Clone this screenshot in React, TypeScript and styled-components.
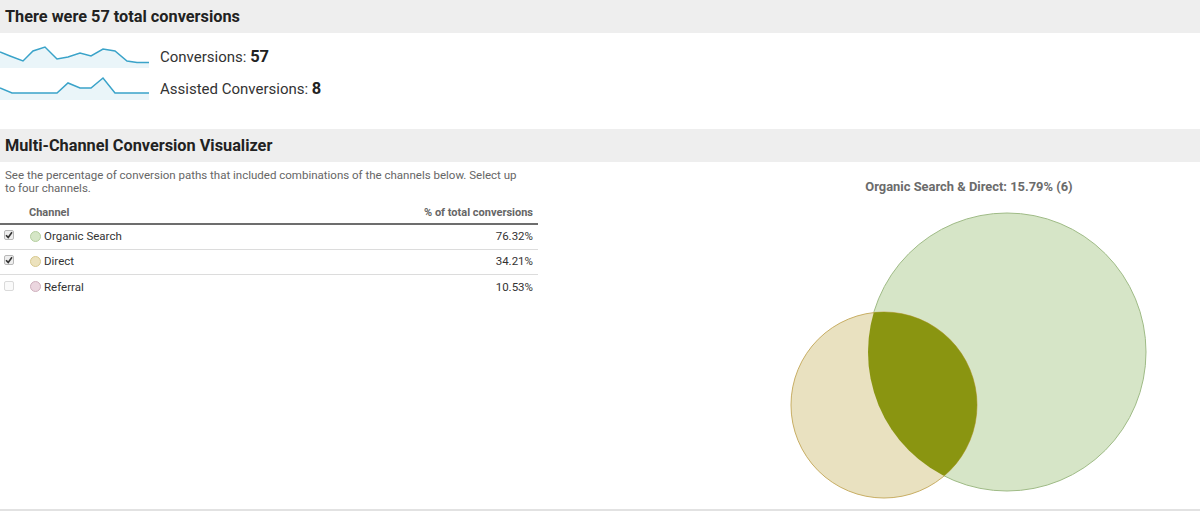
import React from "react";
import styled, { createGlobalStyle } from "styled-components";

const Global = createGlobalStyle`
  html, body { margin: 0; padding: 0; background: #fff; }
  body { font-family: Roboto, "Liberation Sans", Arial, sans-serif; color: #333; }
  * { box-sizing: border-box; }
`;

const Page = styled.div`
  width: 1200px;
  height: 511px;
  border-bottom: 2px solid #e2e2e2;
  overflow: hidden;
`;

const SectionHeader = styled.div`
  height: 33px;
  background: #eeeeee;
  display: flex;
  align-items: center;
  padding-left: 5px;
  font-size: 16.3px;
  font-weight: 700;
  color: #222;
`;

const Metrics = styled.div`
  display: flex;
  flex-direction: column;
  padding-top: 7px;
  height: 96px;
`;

const MetricRow = styled.div`
  height: 32px;
  display: flex;
  align-items: center;
  gap: 11px;
`;

const MetricLabel = styled.span`
  font-size: 15px;
  color: #333;
  b {
    font-size: 16.5px;
    font-weight: 700;
    color: #222;
  }
`;

const Body = styled.div`
  display: flex;
  height: 346px;
`;

const LeftCol = styled.div`
  width: 538px;
  display: flex;
  flex-direction: column;
`;

const Desc = styled.p`
  margin: 0;
  padding: 7px 5px 0 5px;
  font-size: 11.5px;
  line-height: 13px;
  color: #666;
  width: 532px;
  height: 40px;
`;

const Table = styled.div`
  display: flex;
  flex-direction: column;
`;

const HeadRow = styled.div`
  height: 23px;
  display: flex;
  align-items: center;
  justify-content: space-between;
  padding: 0 5px 0 29px;
  font-size: 11px;
  font-weight: 700;
  color: #666;
  border-bottom: 2px solid #6d6d6d;
`;

const Row = styled.div<{ $last?: boolean }>`
  height: 25px;
  display: flex;
  align-items: center;
  padding: 0 5px 2px 4px;
  font-size: 11.5px;
  color: #333;
  border-bottom: ${(p) => (p.$last ? "none" : "1px solid #dcdcdc")};
`;

const Check = styled.span<{ $on: boolean }>`
  width: 10px;
  height: 10px;
  border: 1px solid ${(p) => (p.$on ? "#b8b8b8" : "#dadada")};
  border-radius: 2px;
  background: ${(p) => (p.$on ? "#eeeeee" : "#fafafa")};
  display: flex;
  align-items: center;
  justify-content: center;
  margin-right: 16px;
  margin-top: -2px;
`;

const Dot = styled.span<{ $fill: string; $stroke: string }>`
  width: 11px;
  height: 11px;
  border-radius: 50%;
  background: ${(p) => p.$fill};
  border: 1px solid ${(p) => p.$stroke};
  margin-right: 3px;
`;

const Name = styled.span`
  flex: 1;
`;

const Pct = styled.span`
  text-align: right;
`;

const ChartCol = styled.div`
  margin-left: 211px;
  width: 440px;
  display: flex;
  flex-direction: column;
  align-items: center;
`;

const ChartTitle = styled.div`
  margin-top: 18px;
  height: 14px;
  font-size: 12.9px;
  font-weight: 700;
  color: #6b6b6b;
  line-height: 14px;
`;

const Tick = () => (
  <svg width="8" height="8" viewBox="0 0 8 8">
    <path d="M1 4.2 L3.2 6.4 L7 1.2" fill="none" stroke="#333" strokeWidth="1.6" />
  </svg>
);

const Sparkline = ({ pts }: { pts: [number, number][] }) => {
  const line = pts.map((p) => p.join(",")).join(" ");
  const area = `0,24 ${line} 149,24`;
  return (
    <svg width="149" height="24" viewBox="0 0 149 24">
      <polygon points={area} fill="#eaf5f9" />
      <polyline points={line} fill="none" stroke="#3aa3c9" strokeWidth="1.5" />
    </svg>
  );
};

const conv: [number, number][] = [
  [0, 8], [10, 12], [23, 17], [33, 7], [45, 3], [57, 15], [68, 13], [80, 9], [91, 12], [103, 5], [115, 7], [127, 17], [137, 18.5], [149, 18.5],
];
const assisted: [number, number][] = [
  [0, 12], [12, 17], [57, 17], [68, 7], [80, 12], [91, 12], [103, 2], [115, 17], [149, 17],
];

const rows = [
  { name: "Organic Search", pct: "76.32%", on: true, fill: "#d5e6c6", stroke: "#b5cfa0" },
  { name: "Direct", pct: "34.21%", on: true, fill: "#ece2bd", stroke: "#d8c98f" },
  { name: "Referral", pct: "10.53%", on: false, fill: "#ebd6df", stroke: "#cfb0bd" },
];

export default function App() {
  return (
    <Page>
      <Global />
      <SectionHeader>There were 57 total conversions</SectionHeader>
      <Metrics>
        <MetricRow>
          <Sparkline pts={conv} />
          <MetricLabel>
            Conversions: <b>57</b>
          </MetricLabel>
        </MetricRow>
        <MetricRow>
          <Sparkline pts={assisted} />
          <MetricLabel>
            Assisted Conversions: <b>8</b>
          </MetricLabel>
        </MetricRow>
      </Metrics>
      <SectionHeader>Multi-Channel Conversion Visualizer</SectionHeader>
      <Body>
        <LeftCol>
          <Desc>
            See the percentage of conversion paths that included combinations of the channels below. Select up to four channels.
          </Desc>
          <Table>
            <HeadRow>
              <span>Channel</span>
              <span>% of total conversions</span>
            </HeadRow>
            {rows.map((r, i) => (
              <Row key={r.name} $last={i === rows.length - 1}>
                <Check $on={r.on}>{r.on && <Tick />}</Check>
                <Dot $fill={r.fill} $stroke={r.stroke} />
                <Name>{r.name}</Name>
                <Pct>{r.pct}</Pct>
              </Row>
            ))}
          </Table>
        </LeftCol>
        <ChartCol>
          <ChartTitle>Organic Search &amp; Direct: 15.79% (6)</ChartTitle>
          <svg width="440" height="305" viewBox="0 0 440 305" style={{ marginTop: 7 }}>
            <defs>
              <clipPath id="bigClip">
                <circle cx="258" cy="151" r="139" />
              </clipPath>
            </defs>
            <circle cx="258" cy="151" r="139" fill="#d6e5c7" stroke="#9fbb86" strokeWidth="1" />
            <circle cx="135" cy="204" r="93" fill="#e9e1c0" stroke="#c8ae64" strokeWidth="1" />
            <circle cx="135" cy="204" r="93" fill="#8a9511" clipPath="url(#bigClip)" />
          </svg>
        </ChartCol>
      </Body>
    </Page>
  );
}
